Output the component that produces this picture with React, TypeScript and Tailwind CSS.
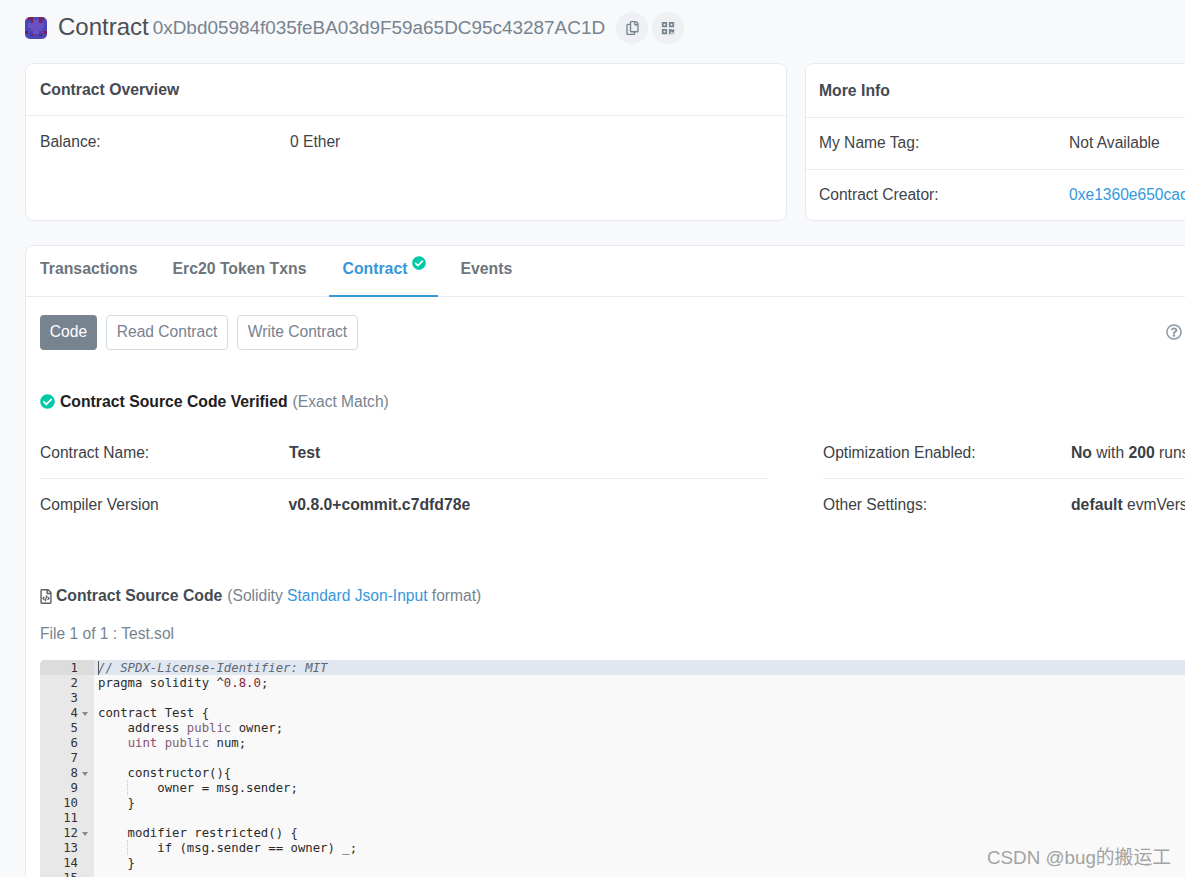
import { FaCheckCircle, FaQrcode, FaRegCopy, FaRegFileCode, FaRegQuestionCircle } from 'react-icons/fa'
import { ReactNode } from 'react'

const blockie = [
  'bmmbbmmb',
  'bbmppmbb',
  'bppppppb',
  'bppppppb',
  'bbppppbb',
  'mbbppbbm',
  'bbmbbmbb',
  'bbbbbbbb',
]

const blockieColors: Record<string, string> = { b: '#4a46b8', p: '#6b50c4', m: '#7f1f55' }

function Logo() {
  return (
    <svg viewBox="0 0 8 8" className="w-[22px] h-[22px] rounded-[5px] shrink-0" shapeRendering="crispEdges">
      {blockie.map((row, y) =>
        row.split('').map((c, x) => <rect key={`${x}-${y}`} x={x} y={y} width="1" height="1" fill={blockieColors[c]} />),
      )}
    </svg>
  )
}

const K = ({ children }: { children: ReactNode }) => <span className="text-[#7f5f6f]">{children}</span>
const T = ({ children }: { children: ReactNode }) => <span className="text-[#8a4f72]">{children}</span>
const N = ({ children }: { children: ReactNode }) => <span className="text-[#7a1f3d]">{children}</span>
const B = ({ children }: { children: ReactNode }) => <b className="text-[15.75px]">{children}</b>

const codeLines: { text: ReactNode; fold?: boolean; guide?: boolean }[] = [
  { text: <span className="italic text-[#5c6773] shadow-[inset_1px_0_0_#555]">// SPDX-License-Identifier: MIT</span> },
  { text: <>pragma solidity ^<N>0.8.0</N>;</> },
  { text: '' },
  { text: 'contract Test {', fold: true },
  { text: <>    address <K>public</K> owner;</> },
  { text: <>    <T>uint</T> <K>public</K> num;</> },
  { text: '' },
  { text: '    constructor(){', fold: true },
  { text: '        owner = msg.sender;', guide: true },
  { text: '    }' },
  { text: '' },
  { text: '    modifier restricted() {', fold: true },
  { text: '        if (msg.sender == owner) _;', guide: true },
  { text: '    }' },
  { text: '' },
]

function CodeEditor() {
  return (
    <div className="mt-[16px] ml-[14px] w-[1400px] rounded-t-[5px] overflow-hidden bg-[#f9f9f9] font-['DejaVu_Sans_Mono',monospace] text-[12.3px] leading-[17px] text-[#2b2b2b]">
      {codeLines.map((line, i) => (
        <div key={i} className={`flex h-[15px] ${i === 0 ? 'bg-[#e0e7f1]' : ''}`}>
          <div className={`w-[54px] shrink-0 flex justify-end pr-[16px] relative text-[#333] ${i === 0 ? 'bg-[#dcdcdc]' : 'bg-[#e8e8e8]'}`}>
            {i + 1}
            {line.fold && (
              <span className="absolute right-[6px] top-[7px] border-x-[3px] border-x-transparent border-t-[4px] border-t-[#8a8a8a]" />
            )}
          </div>
          <pre className="relative pl-[4px] font-['DejaVu_Sans_Mono',monospace]">
            {line.guide && <span className="absolute left-[33px] top-0 h-[15px] border-l border-dotted border-[#c4c4c4]" />}
            {line.text}
          </pre>
        </div>
      ))}
    </div>
  )
}

function DetailRow({ label, value, border, labelWidth = 'w-[249px]' }: { label: string; value: ReactNode; border?: boolean; labelWidth?: string }) {
  return (
    <div className={`flex items-center h-[52px] ${border ? 'border-b border-[#e7eaf3]' : ''}`}>
      <div className={`${labelWidth} shrink-0 text-[#3b3f46]`}>{label}</div>
      <div className="whitespace-nowrap text-[#3b3f46]">{value}</div>
    </div>
  )
}

export default function App() {
  return (
    <div className="w-[1185px] h-[877px] overflow-hidden relative bg-[#f8f9fb] font-['Liberation_Sans',Arial,sans-serif] text-[15.6px] text-[#3f444b]">
      <div className="w-[1700px] pl-[25px]">
        {/* Header */}
        <div className="flex items-center h-[63px] pb-[7px]">
          <Logo />
          <h1 className="ml-[11px] text-[24px] leading-[30px] pb-[2px] text-[#4a4f55]">Contract</h1>
          <span className="ml-[4px] text-[18.93px] leading-[30px] text-[#77838f]">0xDbd05984f035feBA03d9F59a65DC95c43287AC1D</span>
          <span className="ml-[11px] w-[32px] h-[32px] rounded-full bg-[#eef0f3] flex items-center justify-center text-[#77838f]">
            <FaRegCopy className="w-[13px] h-[14px]" />
          </span>
          <span className="ml-[4px] w-[32px] h-[32px] rounded-full bg-[#eef0f3] flex items-center justify-center text-[#77838f]">
            <FaQrcode className="w-[14px] h-[14px]" />
          </span>
        </div>

        {/* Overview cards */}
        <div className="flex gap-[18px]">
          <div className="w-[762px] h-[158px] bg-white rounded-[8px] border border-[#e7eaf3]">
            <div className="h-[52px] flex items-center px-[14px] border-b border-[#e7eaf3] font-bold text-[15.75px] text-[#444a52]">
              Contract Overview
            </div>
            <div className="flex items-center h-[52px] px-[14px]">
              <div className="w-[250px] text-[#3b3f46]">Balance:</div>
              <div>0 Ether</div>
            </div>
          </div>
          <div className="w-[762px] h-[158px] bg-white rounded-[8px] border border-[#e7eaf3]">
            <div className="h-[54px] flex items-center px-[13px] border-b border-[#e7eaf3] font-bold text-[15.75px] text-[#444a52]">
              More Info
            </div>
            <div className="flex items-center h-[52px] pb-[2px] px-[13px] border-b border-[#e7eaf3]">
              <div className="w-[250px]">My Name Tag:</div>
              <div>Not Available</div>
            </div>
            <div className="flex items-center h-[50px] px-[13px]">
              <div className="w-[250px]">Contract Creator:</div>
              <div className="text-[#3498db]">0xe1360e650cac</div>
            </div>
          </div>
        </div>

        {/* Tabs card */}
        <div className="mt-[24px] w-[1600px] h-[700px] bg-white rounded-t-[8px] border border-[#e7eaf3]">
          <div className="flex h-[51px] border-b border-[#e7eaf3] font-bold text-[15.8px] text-[#6c757e]">
            <div className="px-[14px] pb-[5px] flex items-center">Transactions</div>
            <div className="ml-[7px] px-[14px] pb-[5px] flex items-center">Erc20 Token Txns</div>
            <div className="ml-[8px] w-[109px] px-[14px] pb-[4px] flex items-center text-[#3498db] border-b-2 border-[#3498db] h-[51px] relative">
              Contract
              <FaCheckCircle className="absolute left-[83px] top-[10px] w-[14px] h-[14px] text-[#00c9a7]" />
            </div>
            <div className="ml-[9px] px-[14px] pb-[5px] flex items-center">Events</div>
          </div>

          <div className="flex items-center mt-[18px] pl-[14px] h-[35px] relative">
            <span className="h-[35px] w-[57px] pb-[2px] flex items-center justify-center rounded-[4px] bg-[#77838f] text-white">Code</span>
            <span className="ml-[9px] h-[35px] w-[122px] pb-[2px] flex items-center justify-center rounded-[4px] border border-[#d5dae2] text-[#77838f]">Read Contract</span>
            <span className="ml-[9px] h-[35px] w-[121px] pb-[2px] flex items-center justify-center rounded-[4px] border border-[#d5dae2] text-[#77838f]">Write Contract</span>
            <FaRegQuestionCircle className="absolute left-[1140px] top-[9px] w-[16px] h-[16px] text-[#8c98a4]" />
          </div>

          {/* Verified */}
          <div className="flex items-center mt-[42px] ml-[14px] h-[20px]">
            <FaCheckCircle className="w-[15px] h-[15px] -mt-[1px] text-[#00c9a7]" />
            <span className="ml-[5px] font-bold text-[15.75px] text-[#1e2022]">Contract Source Code Verified</span>
            <span className="ml-[5px] text-[#77838f]">(Exact Match)</span>
          </div>

          {/* Details */}
          <div className="flex mt-[15px] ml-[14px]">
            <div className="w-[728px]">
              <DetailRow label="Contract Name:" value={<B>Test</B>} border />
              <DetailRow label="Compiler Version" value={<B>v0.8.0+commit.c7dfd78e</B>} labelWidth="w-[248.5px]" />
            </div>
            <div className="w-[700px] ml-[55px]">
              <DetailRow label="Optimization Enabled:" value={<><B>No</B> with <B>200</B> runs</>} border labelWidth="w-[248px]" />
              <DetailRow label="Other Settings:" value={<><B>default</B> evmVersion</>} labelWidth="w-[248px]" />
            </div>
          </div>

          {/* Source */}
          <div className="flex items-center mt-[55px] ml-[14px] h-[20px]">
            <FaRegFileCode className="w-[12px] h-[15px] text-[#5a6068]" />
            <span className="ml-[4px] font-bold text-[15.75px] text-[#444a52]">Contract Source Code</span>
            <span className="ml-[5px] text-[#77838f]">(Solidity <span className="text-[#3498db]">Standard Json-Input</span> format)</span>
          </div>
          <div className="mt-[18px] ml-[14px] h-[20px] leading-[20px] text-[#77838f]">File 1 of 1 : Test.sol</div>

          <CodeEditor />
        </div>
      </div>

      <div className="absolute left-[987px] top-[847px] text-[18.8px] leading-[22px] text-[#a3a3a3] font-['Liberation_Sans','Noto_Sans_CJK_SC',sans-serif] whitespace-nowrap">
        CSDN @bug的搬运工
      </div>
    </div>
  )
}
